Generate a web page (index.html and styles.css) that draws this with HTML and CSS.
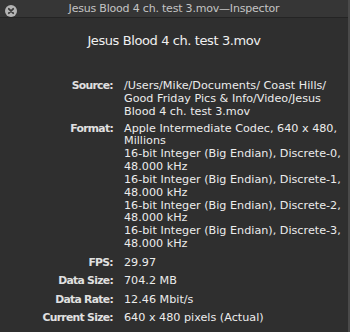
FILE: index.html
```html
<!DOCTYPE html>
<html lang="en">
<head>
    <meta charset="UTF-8">
    <title>Jesus Blood 4 ch. test 3.mov—Inspector</title>
    <link rel="stylesheet" href="styles.css">
</head>
<body>
    <div class="window">
        <div class="titlebar">
            <span class="close">
                <svg width="12" height="12" viewBox="0 0 12 12">
                    <circle cx="6" cy="6" r="6" fill="#b4b4b4"/>
                    <path d="M3.8 3.8 L8.2 8.2 M8.2 3.8 L3.8 8.2" stroke="#3a3a3a" stroke-width="1.8" stroke-linecap="round"/>
                </svg>
            </span>
            <span class="title">Jesus Blood 4 ch. test 3.mov—Inspector</span>
        </div>

        <div class="content">
            <h1 class="filename">Jesus Blood 4 ch. test 3.mov</h1>

            <div class="info">
                <div class="label">Source:</div>
                <div class="value">/Users/Mike/Documents/ Coast Hills/<br>Good Friday Pics &amp; Info/Video/Jesus<br>Blood 4 ch. test 3.mov</div>

                <div class="label">Format:</div>
                <div class="value">Apple Intermediate Codec, 640 x 480,<br>Millions<br>16-bit Integer (Big Endian), Discrete-0,<br>48.000 kHz<br>16-bit Integer (Big Endian), Discrete-1,<br>48.000 kHz<br>16-bit Integer (Big Endian), Discrete-2,<br>48.000 kHz<br>16-bit Integer (Big Endian), Discrete-3,<br>48.000 kHz</div>
            </div>

            <div class="info stats">
                <div class="label">FPS:</div>
                <div class="value">29.97</div>

                <div class="label">Data Size:</div>
                <div class="value">704.2 MB</div>

                <div class="label">Data Rate:</div>
                <div class="value">12.46 Mbit/s</div>

                <div class="label">Current Size:</div>
                <div class="value">640 x 480 pixels (Actual)</div>
            </div>
        </div>
    </div>
</body>
</html>
```

FILE: styles.css
```css
html, body {
    margin: 0;
    height: 100%;
    background-color: #2e2e2e;
}
body {
    font-family: 'DejaVu Sans', 'Liberation Sans', sans-serif;
    color: #e8e8e8;
}
.window {
    height: 332px;
    background-color: #2f2f2f;
    border-right: 2px solid #4a4a4a;
    box-sizing: border-box;
    overflow: hidden;
}
.titlebar {
    position: relative;
    height: 17px;
    background-color: #363636;
    border-bottom: 1px solid #242424;
    display: flex;
    justify-content: center;
    align-items: center;
}
.close {
    position: absolute;
    left: 5px;
    top: 2px;
    height: 12px;
}
.title {
    font-size: 11px;
    color: #c4c4c4;
    letter-spacing: -0.2px;
}
.content {
    padding-top: 15px;
}
.filename {
    margin: 0;
    font-size: 13px;
    line-height: 16px;
    font-weight: normal;
    text-align: center;
    color: #f0f0f0;
    letter-spacing: -0.4px;
}
.info {
    display: grid;
    grid-template-columns: 113px 1fr;
    column-gap: 11px;
    row-gap: 4px;
    margin-top: 31px;
    font-size: 11.2px;
    line-height: 12.85px;
}
.stats {
    margin-top: 6px;
    row-gap: 5.5px;
}
.label {
    text-align: right;
    font-weight: bold;
    font-size: 10.8px;
    letter-spacing: -0.7px;
    color: #e0e0e0;
}
.value {
    white-space: nowrap;
    color: #ececec;
}
```
